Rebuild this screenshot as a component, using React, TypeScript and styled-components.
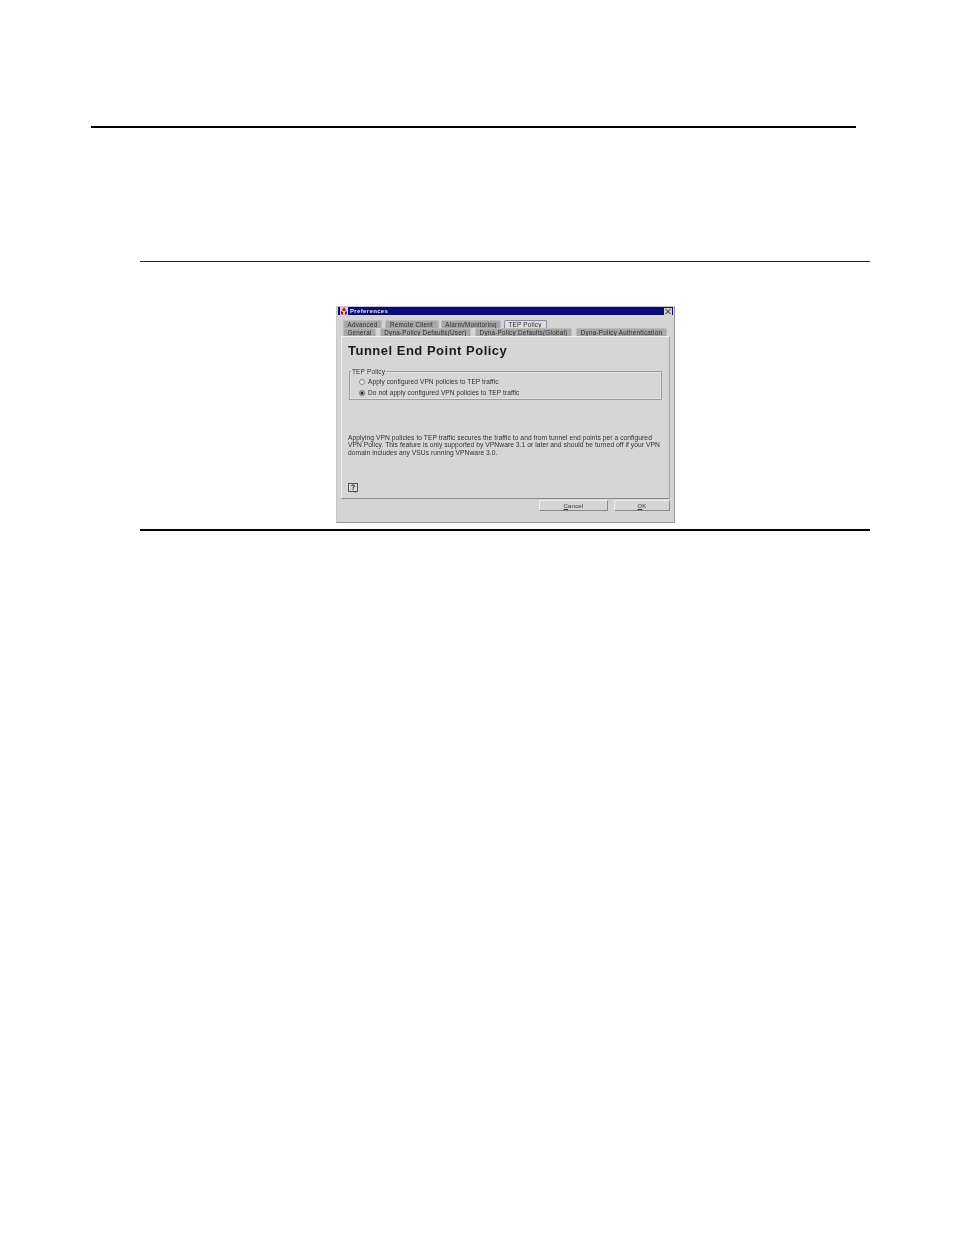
import React from "react";
import styled, { createGlobalStyle } from "styled-components";

const Global = createGlobalStyle`
  html, body { margin: 0; padding: 0; background: #fff; }
  body { font-family: "Liberation Sans", Arial, sans-serif; }
`;

const Page = styled.div`
  width: 954px;
  height: 1235px;
  padding-top: 126px;
  box-sizing: border-box;
  overflow: hidden;
`;

const HeaderRule = styled.div`
  width: 765px;
  height: 2px;
  margin-left: 91px;
  background: #000;
`;

const FigureTop = styled.div`
  width: 730px;
  height: 1px;
  margin: 133px 0 0 140px;
  background: #222;
`;

const FigureBottom = styled.div`
  width: 730px;
  height: 2px;
  margin: 6px 0 0 140px;
  background: #000;
`;

const DialogRow = styled.div`
  margin: 44px 0 0 336px;
`;

const Dialog = styled.div`
  width: 339px;
  height: 217px;
  box-sizing: border-box;
  background: #d4d4d4;
  border: 1px solid #c8c8c8;
  border-right-color: #9a9a9a;
  border-bottom-color: #9a9a9a;
  padding: 0 1px;
  display: flex;
  flex-direction: column;
  filter: blur(0.35px);
  color: #333;
`;

const TitleBar = styled.div`
  height: 8px;
  background: #0a0a78;
  display: flex;
  align-items: center;
  padding: 0 1px 0 2px;
  gap: 2px;
`;

const TitleText = styled.span`
  flex: 1;
  font-size: 6px;
  font-weight: 700;
  letter-spacing: 0.35px;
  color: #e8e8f4;
`;

const CloseBox = styled.span`
  width: 8px;
  height: 7px;
  background: #d0d0d0;
  display: flex;
  align-items: center;
  justify-content: center;
`;

const TabRowTop = styled.div`
  display: flex;
  margin: 5px 0 0 5px;
  height: 8px;
  gap: 2.5px;
`;

const TabRowBottom = styled.div`
  display: flex;
  margin: 0 0 0 5px;
  height: 8px;
  gap: 4px;
`;

const Tab = styled.div<{ $w: number; $active?: boolean }>`
  width: ${(p) => p.$w}px;
  box-sizing: border-box;
  background: ${(p) => (p.$active ? "#dcdcdc" : "#a8a8a8")};
  border: 1px solid ${(p) => (p.$active ? "#8a8aa0" : "#bcbcbc")};
  border-bottom: none;
  border-radius: 2px 2px 0 0;
  font-size: 6.3px;
  line-height: 7px;
  text-align: center;
  white-space: nowrap;
  color: #2c2c2c;
  letter-spacing: 0.25px;
`;

const Panel = styled.div`
  width: 329px;
  height: 163px;
  box-sizing: border-box;
  margin-left: 3px;
  background: #d6d6d6;
  border-right: 1px solid #a4a4a4;
  border-bottom: 1px solid #8c8c8c;
  border-left: 1px solid #eeeeee;
  border-top: 1px solid #eeeeee;
  padding: 7px 7px 0 6px;
  display: flex;
  flex-direction: column;
`;

const Heading = styled.h1`
  margin: 0;
  font-size: 13px;
  line-height: 14px;
  font-weight: 700;
  letter-spacing: 0.5px;
  color: #1c1c1c;
`;

const Group = styled.fieldset`
  margin: 10px 0 0 1px;
  padding: 1px 0 0 9px;
  width: 313px;
  height: 32px;
  box-sizing: border-box;
  border: 1px solid #9c9c9c;
  box-shadow: 0 0 0 0.5px #eee inset;
`;

const Legend = styled.legend`
  margin-left: -8px;
  padding: 0 1px;
  font-size: 6.5px;
  line-height: 7px;
  color: #303030;
  letter-spacing: 0.15px;
`;

const RadioRow = styled.div`
  display: flex;
  align-items: center;
  gap: 3px;
  height: 11px;
  font-size: 6.55px;
  white-space: nowrap;
  letter-spacing: 0.08px;
  color: #303030;
`;

const RadioDot = styled.span<{ $on?: boolean }>`
  width: 6px;
  height: 6px;
  box-sizing: border-box;
  border-radius: 50%;
  border: 1px solid #8a8a8a;
  background: ${(p) => (p.$on ? "#222" : "#e8e8e8")};
  box-shadow: ${(p) => (p.$on ? "0 0 0 0.5px #eee inset" : "none")};
`;

const Note = styled.p`
  margin: 33.5px 0 0 0;
  width: 314px;
  font-size: 6.7px;
  line-height: 7.5px;
  letter-spacing: 0.05px;
  color: #303030;
`;

const Help = styled.div`
  margin-top: 22.5px;
  width: 10px;
  height: 10px;
`;

const Buttons = styled.div`
  display: flex;
  justify-content: flex-end;
  gap: 6px;
  margin-top: 1px;
  padding-right: 3px;
`;

const Btn = styled.div<{ $w: number }>`
  width: ${(p) => p.$w}px;
  height: 11px;
  box-sizing: border-box;
  background: #d4d4d4;
  border: 1px solid #888;
  border-top-color: #eee;
  border-left-color: #eee;
  font-size: 6px;
  line-height: 10px;
  text-align: center;
  color: #333;
  letter-spacing: 0.2px;
`;

const Key = styled.span`
  text-decoration: underline;
`;

export default function App() {
  return (
    <Page>
      <Global />
      <HeaderRule />
      <FigureTop />
      <DialogRow>
        <Dialog>
          <TitleBar>
            <svg width="8" height="8" viewBox="0 0 8 8">
              <rect width="8" height="8" fill="#d8d0d8" />
              <path d="M4 0 L6 3 L5 4 L3 4 L2 3 Z" fill="#d01818" />
              <path d="M1 4 L3 5 L3 8 L1 7 Z M7 4 L5 5 L5 8 L7 7 Z" fill="#a01020" />
            </svg>
            <TitleText>Preferences</TitleText>
            <CloseBox>
              <svg width="6" height="5" viewBox="0 0 6 5">
                <path d="M0.5 0 L5.5 5 M5.5 0 L0.5 5" stroke="#222" strokeWidth="1" />
              </svg>
            </CloseBox>
          </TitleBar>
          <TabRowTop>
            <Tab $w={39}>Advanced</Tab>
            <Tab $w={54}>Remote Client</Tab>
            <Tab $w={60}>Alarm/Monitoring</Tab>
            <Tab $w={43} $active>TEP Policy</Tab>
          </TabRowTop>
          <TabRowBottom>
            <Tab $w={33}>General</Tab>
            <Tab $w={91}>Dyna-Policy Defaults(User)</Tab>
            <Tab $w={97}>Dyna-Policy Defaults(Global)</Tab>
            <Tab $w={91}>Dyna-Policy Authentication</Tab>
          </TabRowBottom>
          <Panel>
            <Heading>Tunnel End Point Policy</Heading>
            <Group>
              <Legend>TEP Policy</Legend>
              <RadioRow>
                <RadioDot />
                Apply configured VPN policies to TEP traffic
              </RadioRow>
              <RadioRow>
                <RadioDot $on />
                Do not apply configured VPN policies to TEP traffic
              </RadioRow>
            </Group>
            <Note>
              Applying VPN policies to TEP traffic secures the traffic to and from tunnel end points per a configured
              VPN Policy. This feature is only supported by VPNware 3.1 or later and should be turned off if your VPN
              domain includes any VSUs running VPNware 3.0.
            </Note>
            <Help>
              <svg width="10" height="10" viewBox="0 0 10 10">
                <rect x="0.5" y="0.5" width="9" height="8" fill="#d8d8d8" stroke="#555" />
                <path d="M3.5 3 Q3.5 2 5 2 Q6.5 2 6.5 3.2 Q6.5 4 5 4.6 L5 5.6 M5 6.4 L5 7.4" stroke="#222" fill="none" />
                <path d="M6 9 L8 9 L8 10 Z" fill="#555" />
              </svg>
            </Help>
          </Panel>
          <Buttons>
            <Btn $w={69}><Key>C</Key>ancel</Btn>
            <Btn $w={56}><Key>O</Key>K</Btn>
          </Buttons>
        </Dialog>
      </DialogRow>
      <FigureBottom />
    </Page>
  );
}
